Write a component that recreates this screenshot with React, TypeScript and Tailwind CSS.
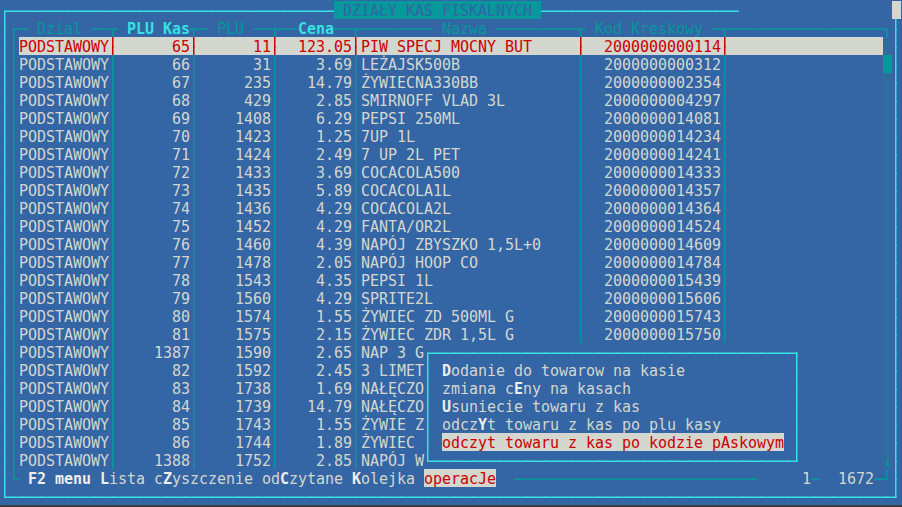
const W = 100;
const H = 28;

type Cell = { ch: string; fg: string; bg: string };

// text colours (tango terminal palette)
const FG: Record<string, string> = {
  w: "text-[#d3d7cf]",
  W: "text-[#eeeeec] font-bold",
  r: "text-[#cc0000]",
  c: "text-[#06989a]",
  C: "text-[#34e2e2] font-bold",
  B: "text-[#34e2e2]",
  t: "text-[#3465a4]",
};

const BG: Record<string, string> = {
  b: "",
  g: "bg-[#d3d7cf]",
  t: "bg-[#06989a]",
  s: "bg-[#2f6c9f]",
};

// left, right, up, down
const ARMS: Record<string, number[]> = {
  "─": [1, 1, 0, 0],
  "│": [0, 0, 1, 1],
  "┌": [0, 1, 0, 1],
  "┐": [1, 0, 0, 1],
  "└": [0, 1, 1, 0],
  "┘": [1, 0, 1, 0],
  "┬": [1, 1, 0, 1],
  "┴": [1, 1, 1, 0],
};

const items: [string, string, string, string, string][] = [
  ["65", "11", "123.05", "PIW SPECJ MOCNY BUT", "2000000000114"],
  ["66", "31", "3.69", "LEŻAJSK500B", "2000000000312"],
  ["67", "235", "14.79", "ŻYWIECNA330BB", "2000000002354"],
  ["68", "429", "2.85", "SMIRNOFF VLAD 3L", "2000000004297"],
  ["69", "1408", "6.29", "PEPSI 250ML", "2000000014081"],
  ["70", "1423", "1.25", "7UP 1L", "2000000014234"],
  ["71", "1424", "2.49", "7 UP 2L PET", "2000000014241"],
  ["72", "1433", "3.69", "COCACOLA500", "2000000014333"],
  ["73", "1435", "5.89", "COCACOLA1L", "2000000014357"],
  ["74", "1436", "4.29", "COCACOLA2L", "2000000014364"],
  ["75", "1452", "4.29", "FANTA/OR2L", "2000000014524"],
  ["76", "1460", "4.39", "NAPÓJ ZBYSZKO 1,5L+0", "2000000014609"],
  ["77", "1478", "2.05", "NAPÓJ HOOP CO", "2000000014784"],
  ["78", "1543", "4.35", "PEPSI 1L", "2000000015439"],
  ["79", "1560", "4.29", "SPRITE2L", "2000000015606"],
  ["80", "1574", "1.55", "ŻYWIEC ZD 500ML G", "2000000015743"],
  ["81", "1575", "2.15", "ŻYWIEC ZDR 1,5L G", "2000000015750"],
  ["1387", "1590", "2.65", "NAP 3 G", ""],
  ["82", "1592", "2.45", "3 LIMET", ""],
  ["83", "1738", "1.69", "NAŁĘCZO", ""],
  ["84", "1739", "14.79", "NAŁĘCZO", ""],
  ["85", "1743", "1.55", "ŻYWIE Z", ""],
  ["86", "1744", "1.89", "ŻYWIEC", ""],
  ["1388", "1752", "2.85", "NAPÓJ W", ""],
];

function buildScreen(): Cell[][] {
  const g: Cell[][] = Array.from({ length: H }, () =>
    Array.from({ length: W }, () => ({ ch: " ", fg: "w", bg: "b" }))
  );
  const put = (r: number, c: number, text: string, fg = "w", bg = "b") => {
    [...text].forEach((ch, i) => {
      if (c + i < W) g[r][c + i] = { ch, fg, bg };
    });
  };
  const fill = (r: number, c0: number, c1: number, ch: string, fg: string, bg = "b") => {
    for (let c = c0; c <= c1; c++) g[r][c] = { ch, fg, bg };
  };
  const right = (r: number, end: number, text: string, fg: string, bg: string) =>
    put(r, end - [...text].length + 1, text, fg, bg);

  // outer window
  put(0, 0, "┌", "B");
  fill(0, 1, 36, "─", "B");
  put(0, 37, " DZIAŁY KAS FISKALNYCH ", "t", "t");
  fill(0, 60, 81, "─", "B");
  put(0, 99, " ", "w", "g");
  for (let r = 1; r <= 26; r++) {
    put(r, 0, "│", "B");
    put(r, 99, "│", "B");
  }
  put(27, 0, "└", "B");
  fill(27, 1, 98, "─", "B");
  put(27, 99, "┘", "B");

  // header
  put(1, 1, "┌─ ", "c");
  put(1, 4, "Dzial", "c");
  put(1, 9, " ──┬ ", "c");
  put(1, 14, "PLU Kas", "C");
  put(1, 21, "┬─ ", "c");
  put(1, 24, "PLU", "c");
  put(1, 27, " ──┬──", "c");
  put(1, 33, "Cena", "C");
  put(1, 37, "──┬", "c");
  fill(1, 40, 47, "─", "c");
  put(1, 49, "Nazwa", "c");
  fill(1, 55, 63, "─", "c");
  put(1, 64, "┬", "c");
  put(1, 66, "Kod Kreskowy", "c");
  put(1, 79, "─┬", "c");
  fill(1, 81, 97, "─", "c");
  put(1, 98, "┐", "c");

  // rows
  items.forEach((it, i) => {
    const r = i + 2;
    const sel = i === 0;
    const fg = sel ? "r" : "w";
    const bg = sel ? "g" : "b";
    put(r, 1, "│", "c");
    if (sel) fill(r, 2, 97, " ", "r", "g");
    put(r, 2, "PODSTAWOWY", fg, bg);
    right(r, 20, it[0], fg, bg);
    right(r, 29, it[1], fg, bg);
    right(r, 38, it[2], fg, bg);
    put(r, 40, it[3], fg, bg);
    right(r, 79, it[4], fg, bg);
    for (const c of [12, 21, 30, 39, 64, 80]) put(r, c, "│", sel ? "r" : "c", bg);
    put(r, 98, " ", "c", "s");
  });
  put(3, 98, " ", "c", "t");
  put(25, 98, "↓", "c", "s");

  // footer
  put(26, 1, "└", "c");
  let c = 3;
  const f = (t: string, fg: string, bg = "b") => {
    put(26, c, t, fg, bg);
    c += [...t].length;
  };
  f("F2 menu ", "W");
  f("L", "W");
  f("ista c", "w");
  f("Z", "W");
  f("yszczenie od", "w");
  f("C", "W");
  f("zytane ", "w");
  f("K", "W");
  f("olejka ", "w");
  f("operacJe", "r", "g");
  fill(26, 57, 83, "─", "c");
  put(26, 89, "1", "w");
  put(26, 90, "─", "c");
  put(26, 93, "1672", "w");
  put(26, 97, "─┘", "c");

  // popup menu
  for (let r = 19; r <= 25; r++) fill(r, 47, 88, " ", "w");
  put(19, 47, "┌", "B");
  fill(19, 48, 87, "─", "B");
  put(19, 88, "┐", "B");
  for (let r = 20; r <= 24; r++) {
    put(r, 47, "│", "B");
    put(r, 88, "│", "B");
  }
  put(25, 47, "└", "B");
  fill(25, 48, 87, "─", "B");
  put(25, 88, "┘", "B");

  put(20, 49, "D", "W");
  put(20, 50, "odanie do towarow na kasie", "w");
  put(21, 49, "zmiana c", "w");
  put(21, 57, "E", "W");
  put(21, 58, "ny na kasach", "w");
  put(22, 49, "U", "W");
  put(22, 50, "suniecie towaru z kas", "w");
  put(23, 49, "odcz", "w");
  put(23, 53, "Y", "W");
  put(23, 54, "t towaru z kas po plu kasy", "w");
  put(24, 49, "odczyt towaru z kas po kodzie pAskowym", "r", "g");

  return g;
}

function Glyph({ cell }: { cell: Cell }) {
  const arms = ARMS[cell.ch];
  const cls = `block w-[9px] h-[18px] shrink-0 ${FG[cell.fg]} ${BG[cell.bg]}`;
  if (arms) {
    const [l, r, u, d] = arms;
    return (
      <span className={cls}>
        <svg width="9" height="18" className="block">
          {l ? <rect x="0" y="9.5" width="4.5" height="1.5" fill="currentColor" /> : null}
          {r ? <rect x="3" y="9.5" width="6" height="1.5" fill="currentColor" /> : null}
          {u ? <rect x="3" y="0" width="1.5" height="11" fill="currentColor" /> : null}
          {d ? <rect x="3" y="9.5" width="1.5" height="8.5" fill="currentColor" /> : null}
        </svg>
      </span>
    );
  }
  return <span className={`${cls} text-center leading-[21px] whitespace-pre`}>{cell.ch}</span>;
}

export default function App() {
  const screen = buildScreen();
  return (
    <div className="w-[902px] h-[507px] bg-[#3465a4] overflow-hidden flex flex-col font-['DejaVu_Sans_Mono',monospace] text-[15px]">
      <div className="pt-px pl-px flex flex-col">
        {screen.map((row, r) => (
          <div key={r} className="flex h-[18px]">
            {row.map((cell, c) => (
              <Glyph key={c} cell={cell} />
            ))}
          </div>
        ))}
      </div>
      <div className="mt-auto h-[2px] bg-[#3a3a3a]" />
    </div>
  );
}
